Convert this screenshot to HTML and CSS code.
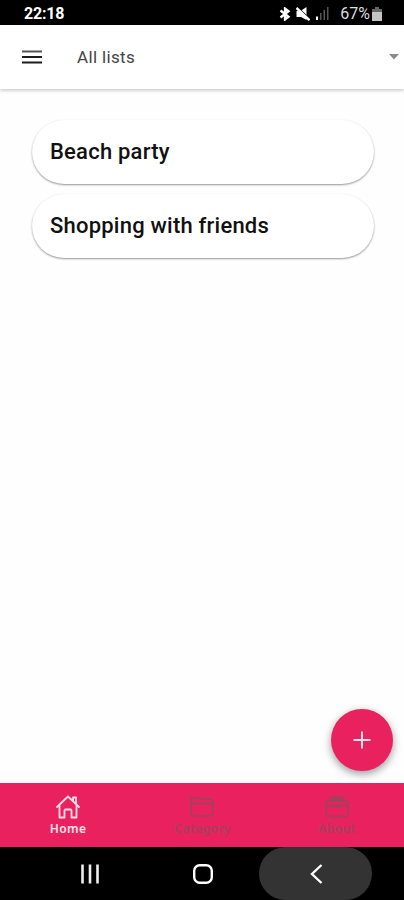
FILE: index.html
```html
<!DOCTYPE html>
<html lang="en">
<head>
    <meta charset="utf-8">
    <meta name="viewport" content="width=device-width, initial-scale=1">
    <title>All lists</title>
    <link rel="stylesheet" href="styles.css">
</head>
<body>
    <div class="screen">
        <div class="status-bar">
            <span class="clock">22:18</span>
            <div class="status-icons">
                <svg class="icon-bluetooth" width="12" height="14" viewBox="0 0 12 14" fill="none" stroke="#fff" stroke-width="2.3">
                    <path d="M1.5 3.5L9.5 9.8L6 12.5V1.5L9.5 4.2L1.5 10.5"/>
                </svg>
                <svg class="icon-mute" width="14" height="14" viewBox="0 0 14 14">
                    <path d="M0.5 4H4.5L10.5 0V13L5 10H0.5Z" fill="#fff"/>
                    <path d="M1.5 0L14 12" stroke="#000" stroke-width="1.2"/>
                    <path d="M0.5 1L13.5 13.2" stroke="#fff" stroke-width="2.4"/>
                </svg>
                <svg class="icon-signal" width="13" height="13" viewBox="0 0 13 13">
                    <path d="M0 9.5H2V13H0Z" fill="#fff"/>
                    <path d="M4 6H5.5V13H4ZM7.5 3H9V13H7.5ZM11 0H12.5V13H11Z" fill="#555"/>
                </svg>
                <span class="battery-level">67%</span>
                <svg class="icon-battery" width="10" height="14" viewBox="0 0 10 14">
                    <path d="M3 0H7V2H10V6H0V2H3Z" fill="#666"/>
                    <path d="M0 5H10V14H0Z" fill="#c4c4c4"/>
                </svg>
            </div>
        </div>

        <header class="header">
            <svg width="20" height="14" viewBox="0 0 20 14">
                <path d="M0 0.5H20V2.5H0Z" fill="#555"/>
                <path d="M0 6H20V8H0ZM0 11.5H20V13.5H0Z" fill="#1c1c1c"/>
            </svg>
            <span class="header-title">All lists</span>
            <svg class="icon-dropdown" width="10" height="6" viewBox="0 0 10 6">
                <path d="M0 0H10L5 5.5Z" fill="#8a8a8a"/>
            </svg>
        </header>

        <main class="content">
            <div class="list-card">Beach party</div>
            <div class="list-card">Shopping with friends</div>
            <button class="fab" aria-label="Add list">
                <svg width="18" height="18" viewBox="0 0 18 18" fill="none" stroke="#ffe1ea" stroke-width="2">
                    <path d="M9 0.5V17.5M0.5 9H17.5"/>
                </svg>
            </button>
        </main>

        <nav class="tabs">
            <a class="tab active">
                <svg width="24" height="24" viewBox="0 0 24 24" fill="none" stroke="currentColor" stroke-width="1.8" stroke-linejoin="round" stroke-linecap="round">
                    <path d="M1 12L12 1.5L23 12M3.5 10V22.5H8.5V15.5Q8.5 14.5 9.5 14.5H14.5Q15.5 14.5 15.5 15.5V22.5H20.5V10M17 6V2.5H20V8.5"/>
                </svg>
                <span>Home</span>
            </a>
            <a class="tab">
                <svg width="24" height="24" viewBox="0 0 24 24" fill="none" stroke="currentColor" stroke-width="1.8" stroke-linejoin="round">
                    <path d="M1 8.5V5Q1 3 3 3H7.5Q8.5 3 9.3 3.6L10 4.2H20.5Q22.7 4.2 22.7 6.2V8.5"/>
                    <path d="M1 8.5H22.7V18.5Q22.7 20.8 20.5 20.8H3.2Q1 20.8 1 18.5Z"/>
                </svg>
                <span>Category</span>
            </a>
            <a class="tab">
                <svg width="24" height="24" viewBox="0 0 24 24" fill="none" stroke="currentColor" stroke-width="1.8">
                    <rect x="1.2" y="6" width="21.6" height="15.5" rx="2.8"/>
                    <path d="M1 10.7H23M4 6Q5.5 2.2 8 2.2H16Q18.5 2.2 20 6M7 4H17"/>
                    <path d="M7.5 10.5H16.5L14 13H10Z" fill="currentColor" stroke="none"/>
                </svg>
                <span>About</span>
            </a>
        </nav>

        <div class="system-nav">
            <div class="system-button">
                <svg width="20" height="20" viewBox="0 0 20 20" stroke="#eee" stroke-width="2.6">
                    <path d="M2.5 0.5V19.5M10 0.5V19.5M17.5 0.5V19.5"/>
                </svg>
            </div>
            <div class="system-button">
                <svg width="20" height="20" viewBox="0 0 20 20" fill="none" stroke="#fff" stroke-width="2.4">
                    <rect x="1.2" y="1.2" width="17.6" height="17.6" rx="5.5"/>
                </svg>
            </div>
            <div class="system-button pressed">
                <svg width="14" height="20" viewBox="0 0 14 20" fill="none" stroke="#fff" stroke-width="2.4">
                    <path d="M12.5 1L3 10L12.5 19"/>
                </svg>
            </div>
        </div>
    </div>
</body>
</html>
```

FILE: styles.css
```css
* {
    box-sizing: border-box;
    margin: 0;
    padding: 0;
}

body {
    font-family: Roboto, "Liberation Sans", sans-serif;
    background-color: #fff;
    color: #111;
}

svg {
    display: block;
    flex-shrink: 0;
}

.screen {
    display: flex;
    flex-direction: column;
    width: 404px;
    height: 900px;
    overflow: hidden;
}

.status-bar {
    display: flex;
    align-items: center;
    justify-content: space-between;
    height: 25px;
    padding: 2px 22px 0 24px;
    background: #000;
    color: #fff;
}

.clock {
    font-size: 16px;
    font-weight: 700;
    line-height: 20px;
    letter-spacing: -0.2px;
}

.status-icons {
    display: flex;
    align-items: center;
}

.icon-mute {
    margin-left: 5px;
}

.icon-signal {
    margin-left: 6px;
}

.battery-level {
    margin: 0 2px 0 11px;
    font-size: 16px;
    line-height: 20px;
    color: #ddd;
}

.header {
    display: flex;
    align-items: center;
    height: 64px;
    padding: 0 4px 0 22px;
    background: #fff;
    box-shadow: 0 2px 3px rgba(0, 0, 0, 0.18);
    z-index: 1;
}

.header-title {
    margin-left: 35px;
    font-size: 17px;
    letter-spacing: 0.35px;
    color: #444;
}

.icon-dropdown {
    margin-left: auto;
    margin-right: 1px;
}

.content {
    position: relative;
    display: flex;
    flex: 1;
    flex-direction: column;
    gap: 10px;
    padding: 31px 30px 0 32px;
    background: #fefefe;
}

.list-card {
    display: flex;
    align-items: center;
    height: 64px;
    padding: 0 18px 2px;
    border-radius: 32px;
    background: #fff;
    box-shadow: 0 1px 2px rgba(0, 0, 0, 0.42);
    font-size: 22px;
    font-weight: 500;
    letter-spacing: 0.22px;
}

/* floats over the list */
.fab {
    position: absolute;
    right: 11px;
    bottom: 12px;
    display: flex;
    align-items: center;
    justify-content: center;
    width: 62px;
    height: 62px;
    border: none;
    border-radius: 50%;
    background: #e9215e;
    box-shadow: 0 3px 8px rgba(0, 0, 0, 0.4);
}

.tabs {
    display: flex;
    height: 64px;
    padding-left: 1px;
    background: #e9215e;
}

.tab {
    display: flex;
    flex: 1;
    flex-direction: column;
    align-items: center;
    padding-top: 12px;
    font-family: "Noto Sans", sans-serif;
    font-size: 12px;
    font-weight: 600;
    line-height: 14px;
    letter-spacing: 0.4px;
    color: #a3415d;
}

.tab span {
    margin-top: 3px;
}

.tab.active {
    color: #ffe1ea;
}

.system-nav {
    display: flex;
    justify-content: center;
    height: 53px;
    padding-left: 1px;
    background: #000;
}

.system-button {
    display: flex;
    align-items: center;
    justify-content: center;
    width: 113px;
    height: 53px;
}

.system-button.pressed {
    border-radius: 27px;
    background: #333;
}
```
